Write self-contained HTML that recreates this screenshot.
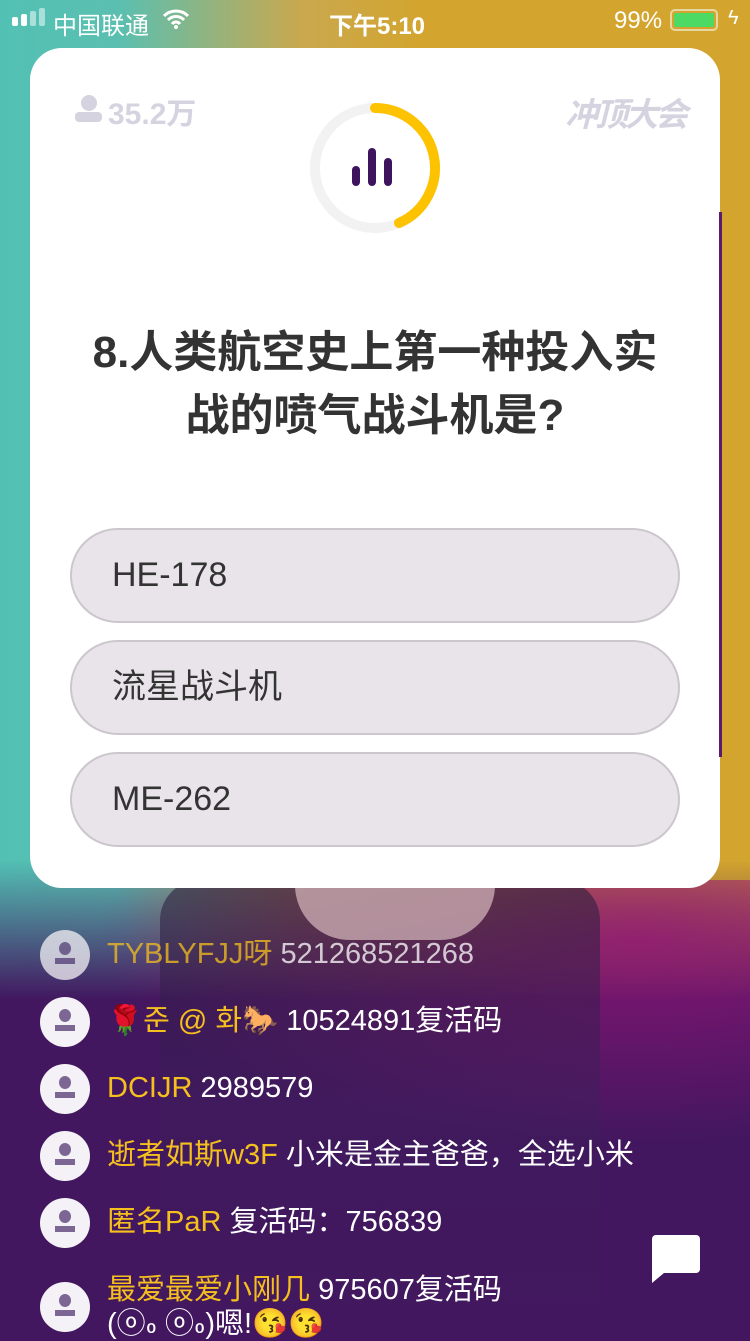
<!DOCTYPE html>
<html><head><meta charset="utf-8"><style>
*{margin:0;padding:0;box-sizing:border-box}
body{width:750px;height:1334px;overflow:hidden;position:relative;font-family:"Liberation Sans","Noto Sans CJK SC",sans-serif;background:#42175f;}
.top{position:absolute;left:0;top:0;width:750px;height:1000px;background:linear-gradient(90deg,#52c1b4 0,#5bbfb0 120px,#c9a84f 300px,#d3a52f 420px,#d3a52f 750px);
-webkit-mask-image:linear-gradient(180deg,#000 0,#000 860px,transparent 1000px);mask-image:linear-gradient(180deg,#000 0,#000 860px,transparent 1000px)}
.mag{position:absolute;left:0;top:880px;width:750px;height:300px;background:radial-gradient(ellipse at 85% 20%,rgba(150,20,120,.8),rgba(150,20,120,0) 60%)}
.suit{position:absolute;left:160px;top:880px;width:440px;height:454px;background:linear-gradient(180deg,rgba(40,30,60,.6),rgba(60,30,90,.4) 50%,rgba(66,23,95,0));border-radius:40px 40px 0 0}
.hands{position:absolute;left:295px;top:885px;width:200px;height:55px;background:#c9a9b0;border-radius:0 0 80px 80px;opacity:.8}
.sb{position:absolute;top:0;left:0;width:750px;height:40px;color:#fff;font-size:24px}
.card{position:absolute;left:30px;top:48px;width:690px;height:840px;background:#fff;border-radius:32px}
.q{position:absolute;left:0;width:690px;top:273px;text-align:center;font-size:44px;line-height:63px;color:#333;font-weight:bold}
.opt{position:absolute;left:40px;width:610px;height:95px;border-radius:48px;background:#e8e4e9;border:2px solid #cbc7cc;font-size:34px;color:#333;padding-left:40px;line-height:91px}
.row{position:absolute;left:40px;height:50px;font-size:29px;color:#fff;white-space:nowrap}
.av{position:absolute;left:0;top:0;width:50px;height:50px;border-radius:50%;background:#f4f2f6}
.av:before{content:"";position:absolute;left:19px;top:12px;width:12px;height:13px;border-radius:50%;background:#7c6694}
.av:after{content:"";position:absolute;left:15px;top:28px;width:20px;height:6px;background:#7c6694}
.row span.t{position:absolute;left:67px;top:7px;line-height:34px}
.y{color:#f5c01e}
</style></head><body>
<div class="top"></div><div class="mag"></div>
<div class="suit"></div><div class="hands"></div>
<div class="sb">
 <div style="position:absolute;left:12px;top:17px;width:6px;height:9px;background:#fff;border-radius:2px"></div>
 <div style="position:absolute;left:21px;top:14px;width:6px;height:12px;background:#fff;border-radius:2px"></div>
 <div style="position:absolute;left:30px;top:11px;width:6px;height:15px;background:rgba(255,255,255,.5);border-radius:2px"></div>
 <div style="position:absolute;left:39px;top:8px;width:6px;height:18px;background:rgba(255,255,255,.5);border-radius:2px"></div>
 <span style="position:absolute;left:53px;top:6px">中国联通</span>
 <svg style="position:absolute;left:163px;top:9px" width="26" height="20" viewBox="0 0 26 20"><path d="M1 7a17 17 0 0 1 24 0M5 11a11 11 0 0 1 16 0M9 15a5 5 0 0 1 8 0" stroke="#fff" stroke-width="3" fill="none"/><circle cx="13" cy="18" r="2" fill="#fff"/></svg>
 <span style="position:absolute;left:329px;top:6px;font-weight:bold">下午5:10</span>
 <span style="position:absolute;left:614px;top:7px">99%</span>
 <div style="position:absolute;left:670px;top:9px;width:48px;height:22px;border:2px solid #e8d8a0;border-radius:5px;padding:2px"><div style="width:100%;height:100%;background:#4cd964;border-radius:2px"></div></div>
 <span style="position:absolute;left:728px;top:7px;font-size:20px">ϟ</span>
</div>
<div class="card">
 <div style="position:absolute;left:45px;top:47px;width:27px;height:28px">
  <div style="position:absolute;left:6px;top:0;width:16px;height:16px;border-radius:50%;background:#d6d3e0"></div>
  <div style="position:absolute;left:0;top:17px;width:27px;height:10px;border-radius:4px;background:#d6d3e0"></div></div>
 <span style="position:absolute;left:78px;top:41px;font-size:30px;font-weight:bold;color:#d6d3e0">35.2万</span>
 <span style="position:absolute;left:535px;top:40px;font-size:33px;font-weight:bold;font-style:italic;color:#d6d3e0;letter-spacing:-3px">冲顶大会</span>
 <svg style="position:absolute;left:275px;top:50px" width="140" height="140" viewBox="0 0 140 140">
  <circle cx="70" cy="70" r="60" stroke="#f2f2f2" stroke-width="10" fill="none"/>
  <path d="M70 10A60 60 0 0 1 94 125" stroke="#fdc200" stroke-width="10" fill="none" stroke-linecap="round"/>
  <line x1="51" y1="72" x2="51" y2="84" stroke="#3e145c" stroke-width="8" stroke-linecap="round"/>
  <line x1="67" y1="54" x2="67" y2="84" stroke="#3e145c" stroke-width="8" stroke-linecap="round"/>
  <line x1="83" y1="64" x2="83" y2="84" stroke="#3e145c" stroke-width="8" stroke-linecap="round"/>
 </svg>
 <div class="q">8.人类航空史上第一种投入实<br>战的喷气战斗机是?</div>
 <div class="opt" style="top:480px">HE-178</div>
 <div class="opt" style="top:592px">流星战斗机</div>
 <div class="opt" style="top:704px">ME-262</div>
</div>
<div style="position:absolute;left:719px;top:212px;width:3px;height:545px;background:#5a1a70"></div>
<div class="row" style="top:930px;opacity:.75"><div class="av"></div><span class="t"><span class="y">TYBLYFJJ呀</span> 521268521268</span></div>
<div class="row" style="top:997px"><div class="av"></div><span class="t"><span class="y">🌹준 @ 화🐎</span> 10524891复活码</span></div>
<div class="row" style="top:1064px"><div class="av"></div><span class="t"><span class="y">DCIJR</span> 2989579</span></div>
<div class="row" style="top:1131px"><div class="av"></div><span class="t"><span class="y">逝者如斯w3F</span> 小米是金主爸爸，全选小米</span></div>
<div class="row" style="top:1198px"><div class="av"></div><span class="t"><span class="y">匿名PaR</span> 复活码：756839</span></div>
<div class="row" style="top:1282px"><div class="av"></div><span class="t" style="top:-9px"><span class="y">最爱最爱小刚几</span> 975607复活码<br>(ⓞ៰ ⓞ៰)嗯!😘😘</span></div>
<svg style="position:absolute;left:652px;top:1235px" width="48" height="48" viewBox="0 0 48 48"><path d="M4 0h40a4 4 0 0 1 4 4v30a4 4 0 0 1-4 4H12L0 48V4a4 4 0 0 1 4-4z" fill="#fff"/></svg>
</body></html>
